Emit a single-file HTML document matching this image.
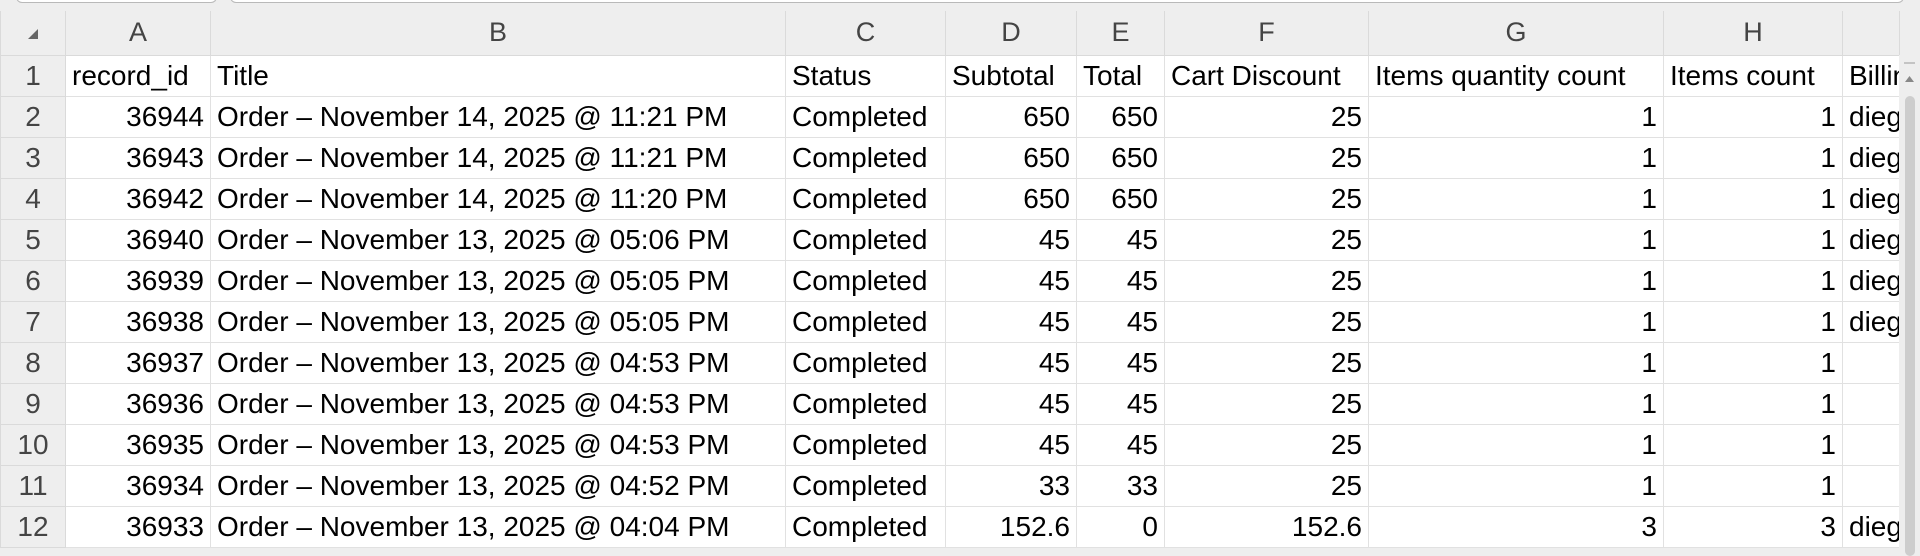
<!DOCTYPE html>
<html><head><meta charset="utf-8"><style>
html,body{margin:0;padding:0;}
body{width:1920px;height:550px;overflow:hidden;background:#eeeeee;position:relative;font-family:"Liberation Sans",Arial,sans-serif;}
.box{position:absolute;top:-10px;height:12px;background:#fff;border:1px solid #b9b9b9;border-top:none;border-radius:0 0 6px 6px;}
table{position:absolute;left:0;top:11px;width:1899px;border-collapse:collapse;table-layout:fixed;}
td{height:41px;padding:0 6px;border:1px solid #e1e1e1;font-size:28px;color:#000;white-space:nowrap;overflow:hidden;background:#fff;box-sizing:border-box;}
tr.h td{height:44px;background:#eeeeee;color:#444;text-align:center;border-color:#dadada;border-top:none;font-size:27px;}
td.n{background:#eeeeee;color:#444;text-align:center;border-color:#dadada;}
td.r{text-align:right;}
.sb{position:absolute;left:1899px;top:55px;width:21px;height:495px;background:#eeeeee;}
.thumb{position:absolute;left:6px;top:41px;width:10px;height:460px;background:#cdcdcd;border-radius:5px;}
</style></head><body>
<div class="box" style="left:16px;width:199px"></div>
<div class="box" style="left:230px;width:1672px"></div>
<table>
<colgroup><col style="width:65px"><col style="width:145px"><col style="width:575px"><col style="width:160px"><col style="width:131px"><col style="width:88px"><col style="width:204px"><col style="width:295px"><col style="width:179px"><col style="width:57px"></colgroup>
<tr class="h"><td><svg width="14" height="14" style="vertical-align:middle"><polygon points="12,2 12,12 2,12" fill="#666"/></svg></td><td>A</td><td>B</td><td>C</td><td>D</td><td>E</td><td>F</td><td>G</td><td>H</td><td></td></tr>
<tr><td class="n">1</td><td>record_id</td><td>Title</td><td>Status</td><td>Subtotal</td><td>Total</td><td>Cart Discount</td><td>Items quantity count</td><td>Items count</td><td>Billing</td></tr>
<tr><td class="n">2</td><td class="r">36944</td><td>Order – November 14, 2025 @ 11:21 PM</td><td>Completed</td><td class="r">650</td><td class="r">650</td><td class="r">25</td><td class="r">1</td><td class="r">1</td><td>diego</td></tr>
<tr><td class="n">3</td><td class="r">36943</td><td>Order – November 14, 2025 @ 11:21 PM</td><td>Completed</td><td class="r">650</td><td class="r">650</td><td class="r">25</td><td class="r">1</td><td class="r">1</td><td>diego</td></tr>
<tr><td class="n">4</td><td class="r">36942</td><td>Order – November 14, 2025 @ 11:20 PM</td><td>Completed</td><td class="r">650</td><td class="r">650</td><td class="r">25</td><td class="r">1</td><td class="r">1</td><td>diego</td></tr>
<tr><td class="n">5</td><td class="r">36940</td><td>Order – November 13, 2025 @ 05:06 PM</td><td>Completed</td><td class="r">45</td><td class="r">45</td><td class="r">25</td><td class="r">1</td><td class="r">1</td><td>diego</td></tr>
<tr><td class="n">6</td><td class="r">36939</td><td>Order – November 13, 2025 @ 05:05 PM</td><td>Completed</td><td class="r">45</td><td class="r">45</td><td class="r">25</td><td class="r">1</td><td class="r">1</td><td>diego</td></tr>
<tr><td class="n">7</td><td class="r">36938</td><td>Order – November 13, 2025 @ 05:05 PM</td><td>Completed</td><td class="r">45</td><td class="r">45</td><td class="r">25</td><td class="r">1</td><td class="r">1</td><td>diego</td></tr>
<tr><td class="n">8</td><td class="r">36937</td><td>Order – November 13, 2025 @ 04:53 PM</td><td>Completed</td><td class="r">45</td><td class="r">45</td><td class="r">25</td><td class="r">1</td><td class="r">1</td><td></td></tr>
<tr><td class="n">9</td><td class="r">36936</td><td>Order – November 13, 2025 @ 04:53 PM</td><td>Completed</td><td class="r">45</td><td class="r">45</td><td class="r">25</td><td class="r">1</td><td class="r">1</td><td></td></tr>
<tr><td class="n">10</td><td class="r">36935</td><td>Order – November 13, 2025 @ 04:53 PM</td><td>Completed</td><td class="r">45</td><td class="r">45</td><td class="r">25</td><td class="r">1</td><td class="r">1</td><td></td></tr>
<tr><td class="n">11</td><td class="r">36934</td><td>Order – November 13, 2025 @ 04:52 PM</td><td>Completed</td><td class="r">33</td><td class="r">33</td><td class="r">25</td><td class="r">1</td><td class="r">1</td><td></td></tr>
<tr><td class="n">12</td><td class="r">36933</td><td>Order – November 13, 2025 @ 04:04 PM</td><td>Completed</td><td class="r">152.6</td><td class="r">0</td><td class="r">152.6</td><td class="r">3</td><td class="r">3</td><td>diego</td></tr>
</table>
<div class="sb"><div style="position:absolute;left:5px;top:7px;width:11px;height:2px;background:#c4c4c4"></div><svg style="position:absolute;left:5px;top:20px" width="11" height="8"><polygon points="5.5,1 10,7 1,7" fill="#888"/></svg><div class="thumb"></div></div>
</body></html>
